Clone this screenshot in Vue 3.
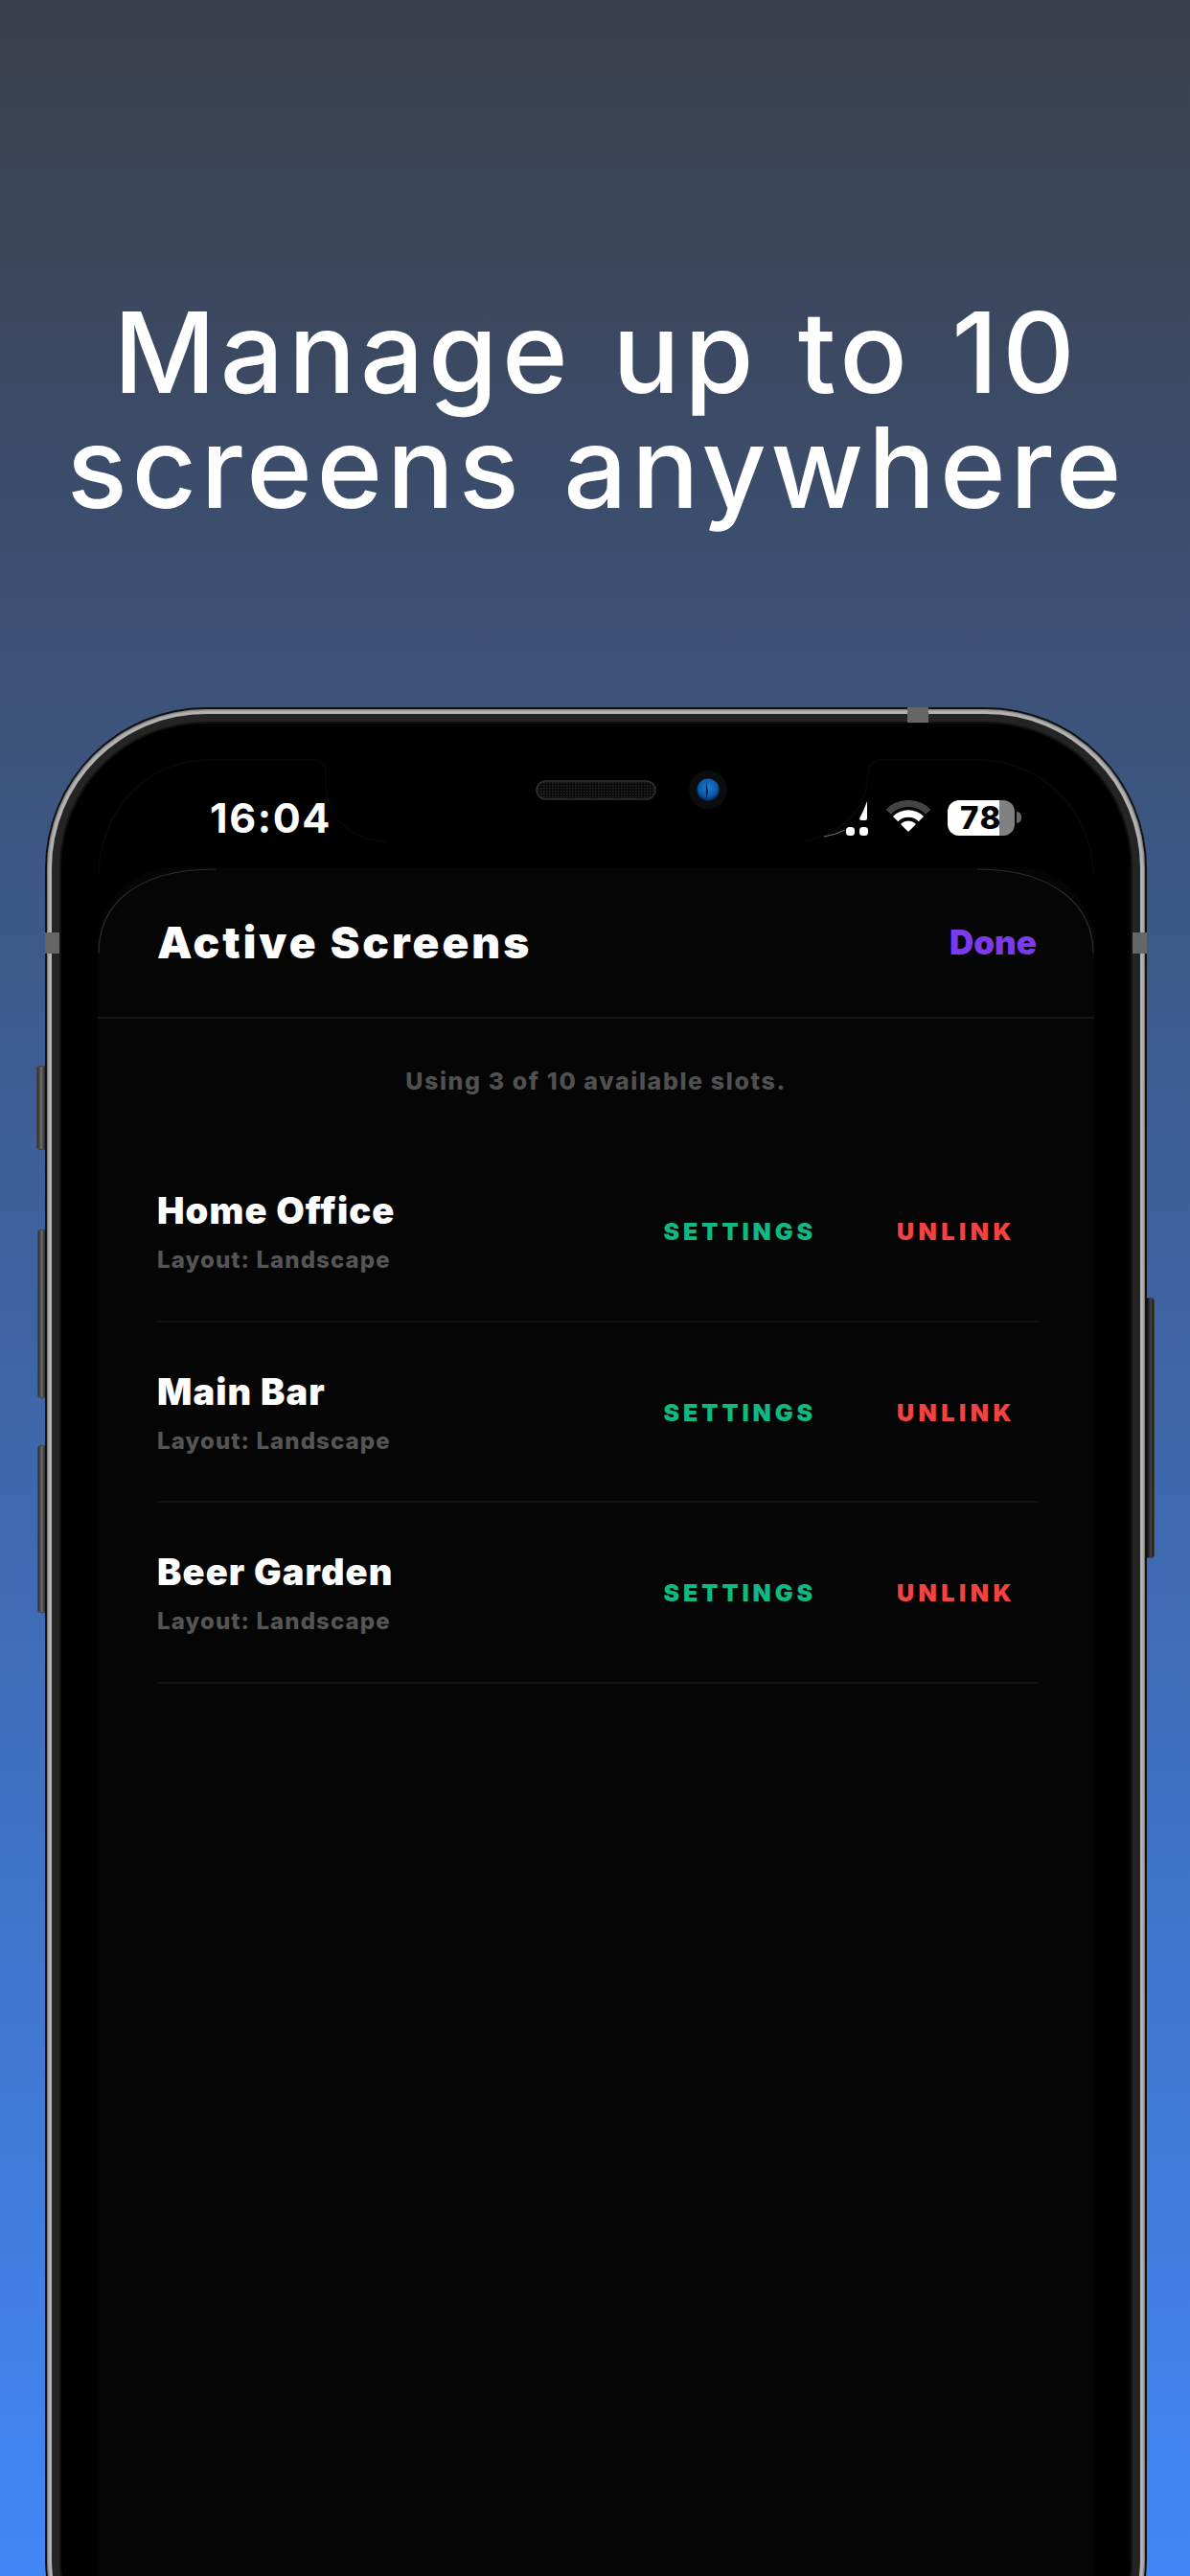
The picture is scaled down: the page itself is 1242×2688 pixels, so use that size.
<script setup>
const rows = [
  { name: 'Home Office', layout: 'Layout: Landscape' },
  { name: 'Main Bar', layout: 'Layout: Landscape' },
  { name: 'Beer Garden', layout: 'Layout: Landscape' }
]
</script>

<template>
  <div class="page">
    <h1 class="headline">Manage up to 10<br />screens anywhere</h1>
    <div class="phone">
      <span class="side-btn left b1"></span>
      <span class="side-btn left b2"></span>
      <span class="side-btn left b3"></span>
      <span class="side-btn right b4"></span>
      <div class="ring-silver">
        <div class="ring-grey">
          <div class="screen">
            <div class="status">
              <span class="time">16:04</span>
              <div class="status-icons">
                <svg class="signal" viewBox="0 0 40 38" width="40" height="38">
                  <path d="M38 1 L38 19 Q38 21 36 21 L32 21 Q30 21 30 19 Q34 12 38 1 Z" fill="#fff" />
                  <rect x="16" y="28" width="9" height="9" rx="3.5" fill="#fff" />
                  <rect x="30" y="28" width="9" height="9" rx="3.5" fill="#fff" />
                </svg>
                <svg class="wifi" viewBox="0 0 48 34" width="48" height="34">
                  <path d="M3.1 12.1 A29.5 29.5 0 0 1 44.9 12.1" fill="none" stroke="#444" stroke-width="7" />
                  <path d="M10.6 19.6 A19 19 0 0 1 37.4 19.6" fill="none" stroke="#fff" stroke-width="7.5" />
                  <path d="M24 32 L17 25 A10 10 0 0 1 31 25 Z" fill="#fff" stroke="#fff" stroke-linejoin="round" stroke-width="1.5" />
                </svg>
                <div class="battery"><span class="battery-num">78</span></div>
              </div>
            </div>
            <div class="sheet">
              <header class="sheet-head">
                <span class="sheet-title">Active Screens</span>
                <span class="done">Done</span>
              </header>
              <p class="usage">Using 3 of 10 available slots.</p>
              <ul class="rows">
                <li v-for="row in rows" :key="row.name" class="row">
                  <div class="info">
                    <div class="name">{{ row.name }}</div>
                    <div class="layout">{{ row.layout }}</div>
                  </div>
                  <div class="actions">
                    <span class="action settings">SETTINGS</span>
                    <span class="action unlink">UNLINK</span>
                  </div>
                </li>
              </ul>
            </div>
          </div>
        </div>
      </div>
      <span class="band band-l"></span>
      <span class="band band-r"></span>
      <span class="band band-t"></span>
      <svg class="overlay" viewBox="47 738 1150 300" width="1150" height="300">
        <defs>
          <pattern id="mesh" width="3" height="3" patternUnits="userSpaceOnUse">
            <rect width="3" height="3" fill="#080808" />
            <rect width="1.5" height="1.5" fill="#2a2a2a" />
          </pattern>
          <radialGradient id="lens" cx="50%" cy="40%" r="60%">
            <stop offset="0%" stop-color="#1f7fd6" />
            <stop offset="70%" stop-color="#0b57a8" />
            <stop offset="100%" stop-color="#062a55" />
          </radialGradient>
        </defs>
        <path d="M103 913 C103 850 150 793 217 793 L325 793 Q340 793 340 807 L340 823 C342 855 370 878 403 878" fill="none" stroke="#090909" stroke-width="1.5" />
        <path d="M1141 913 C1141 850 1090 793 1020 793 L920 793 Q905 793 905 815 C903 845 880 870 838 878" fill="none" stroke="#090909" stroke-width="1.5" />
        <path d="M860 873 Q872 871 882 866" fill="none" stroke="#c8c8c8" stroke-width="0.6" />
        <path d="M103 995 C103 945 140 907 225 907" fill="none" stroke="#2c2c2c" stroke-width="1.2" />
        <path d="M1141 995 C1141 945 1100 907 1020 907" fill="none" stroke="#2c2c2c" stroke-width="1.2" />
        <rect x="560" y="815" width="124" height="19" rx="9.5" fill="url(#mesh)" stroke="#333" stroke-width="1.5" />
        <circle cx="739" cy="824" r="20" fill="#0b0c0f" />
        <circle cx="739" cy="824" r="11.5" fill="url(#lens)" />
        <path d="M737 814 L739 826 L737 835 Z" fill="#04142b" />
      </svg>
    </div>
  </div>
</template>

<style>
html,
body {
  margin: 0;
  padding: 0;
}
</style>

<style scoped>
.page {
  width: 1242px;
  height: 2688px;
  overflow: hidden;
  background: linear-gradient(180deg, #3a3f4b 0%, #4287f6 100%);
  font-family: Inter, 'Liberation Sans', sans-serif;
}
.headline {
  margin: 0;
  padding: 308px 0 0 3px;
  height: 738px;
  box-sizing: border-box;
  text-align: center;
  color: #fff;
  font-family: Inter, 'Liberation Sans', sans-serif;
  font-weight: 500;
  font-size: 117px;
  line-height: 120px;
  letter-spacing: 4.6px;
  word-spacing: 6px;
}
.phone {
  position: relative;
  width: 1150px;
  height: 2100px;
  margin-left: 47px;
  padding: 2px;
  box-sizing: border-box;
  background: #101010;
  border-radius: 168px;
}
.ring-silver {
  height: 100%;
  padding: 5px;
  box-sizing: border-box;
  background: #b4b4b4;
  border-radius: 166px;
  box-shadow: inset 0 0 3px #222;
}
.ring-grey {
  height: 100%;
  padding: 10px;
  box-sizing: border-box;
  background: #242424;
  border-radius: 161px;
}
.screen {
  height: 100%;
  display: flex;
  flex-direction: column;
  background: #000;
  border-radius: 150px;
  box-shadow: 0 0 0 2px #111;
}
.status {
  height: 150px;
  flex: none;
  box-sizing: border-box;
  display: flex;
  align-items: flex-start;
  justify-content: space-between;
  padding: 72px 121px 0 155px;
}
.time {
  color: #fff;
  font-weight: 700;
  font-size: 43px;
  line-height: 52px;
  letter-spacing: 1.6px;
}
.status-icons {
  display: flex;
  align-items: flex-start;
  margin-top: 8px;
}
.signal {
  display: block;
  margin-right: 17px;
}
.wifi {
  display: block;
  margin-right: 17px;
}
.battery {
  position: relative;
  width: 70px;
  height: 37px;
  border-radius: 12px;
  background: linear-gradient(90deg, #fff 0, #fff 54px, #808080 54px, #808080 100%);
  display: flex;
  align-items: center;
  padding-left: 13px;
  box-sizing: border-box;
}
.battery::after {
  content: '';
  position: absolute;
  left: 72px;
  top: 12px;
  width: 5px;
  height: 12px;
  background: #666;
  border-radius: 0 6px 6px 0;
}
.battery-num {
  color: #000;
  font-weight: 800;
  font-size: 33px;
  line-height: 37px;
  letter-spacing: 1.5px;
}
.sheet {
  flex: 1;
  margin: 0 38px;
  background: #050505;
  border-radius: 80px 80px 0 0;
}
.sheet-head {
  height: 158px;
  box-sizing: border-box;
  display: flex;
  align-items: center;
  justify-content: space-between;
  padding: 0 60px 0 62px;
  border-bottom: 2px solid #171717;
}
.sheet-title {
  color: #fff;
  font-weight: 900;
  font-size: 46px;
  letter-spacing: 3px;
}
.done {
  color: #7c3aed;
  font-weight: 900;
  font-size: 35px;
}
.usage {
  margin: 0;
  height: 128px;
  box-sizing: border-box;
  padding-top: 50px;
  text-align: center;
  color: #505050;
  font-weight: 800;
  font-size: 25px;
  line-height: 30px;
  letter-spacing: 1.6px;
}
.rows {
  list-style: none;
  margin: 0 58px 0 62px;
  padding: 0;
}
.row {
  height: 188.5px;
  box-sizing: border-box;
  display: flex;
  align-items: center;
  justify-content: space-between;
  border-bottom: 2px solid #131313;
}
.info {
  display: flex;
  flex-direction: column;
  gap: 14px;
  padding-top: 2px;
}
.name {
  color: #fff;
  font-weight: 900;
  font-size: 38px;
  line-height: 46px;
  letter-spacing: 1.1px;
}
.layout {
  color: #555;
  font-weight: 800;
  font-size: 24px;
  line-height: 30px;
  letter-spacing: 1.1px;
}
.actions {
  display: flex;
  align-items: center;
  gap: 84px;
  padding: 2px 24px 0 0;
}
.action {
  font-weight: 900;
  font-size: 25px;
  line-height: 30px;
  letter-spacing: 3.9px;
}
.settings {
  color: #10b981;
}
.unlink {
  color: #ef4444;
  letter-spacing: 4.5px;
}
.side-btn {
  position: absolute;
  box-sizing: border-box;
}
.side-btn.left {
  left: -8px;
  width: 8px;
  background: linear-gradient(90deg, #2a2a2a, #6a6a6a 50%, #2a2a2a);
  border: 1.5px solid #444;
  border-right: 0;
  border-radius: 4px 0 0 4px;
}
.b1 {
  top: 374px;
  height: 88px;
}
.side-btn.b1 {
  left: -9px;
  width: 9px;
}
.b2 {
  top: 545px;
  height: 176px;
}
.b3 {
  top: 770px;
  height: 175px;
}
.side-btn.right {
  right: -8px;
  top: 616px;
  height: 272px;
  width: 8px;
  background: linear-gradient(90deg, #0c0c0c, #444 60%, #151515);
  border: 1.5px solid #3c3c3c;
  border-left: 0;
  border-radius: 0 4px 4px 0;
}
.band {
  position: absolute;
  background: #666;
}
.band-l {
  left: 0;
  top: 235px;
  width: 15px;
  height: 22px;
}
.band-r {
  right: 0;
  top: 235px;
  width: 15px;
  height: 22px;
}
.band-t {
  left: 900px;
  top: 0;
  width: 22px;
  height: 16px;
}
.overlay {
  position: absolute;
  left: 0;
  top: 0;
  pointer-events: none;
}
</style>
